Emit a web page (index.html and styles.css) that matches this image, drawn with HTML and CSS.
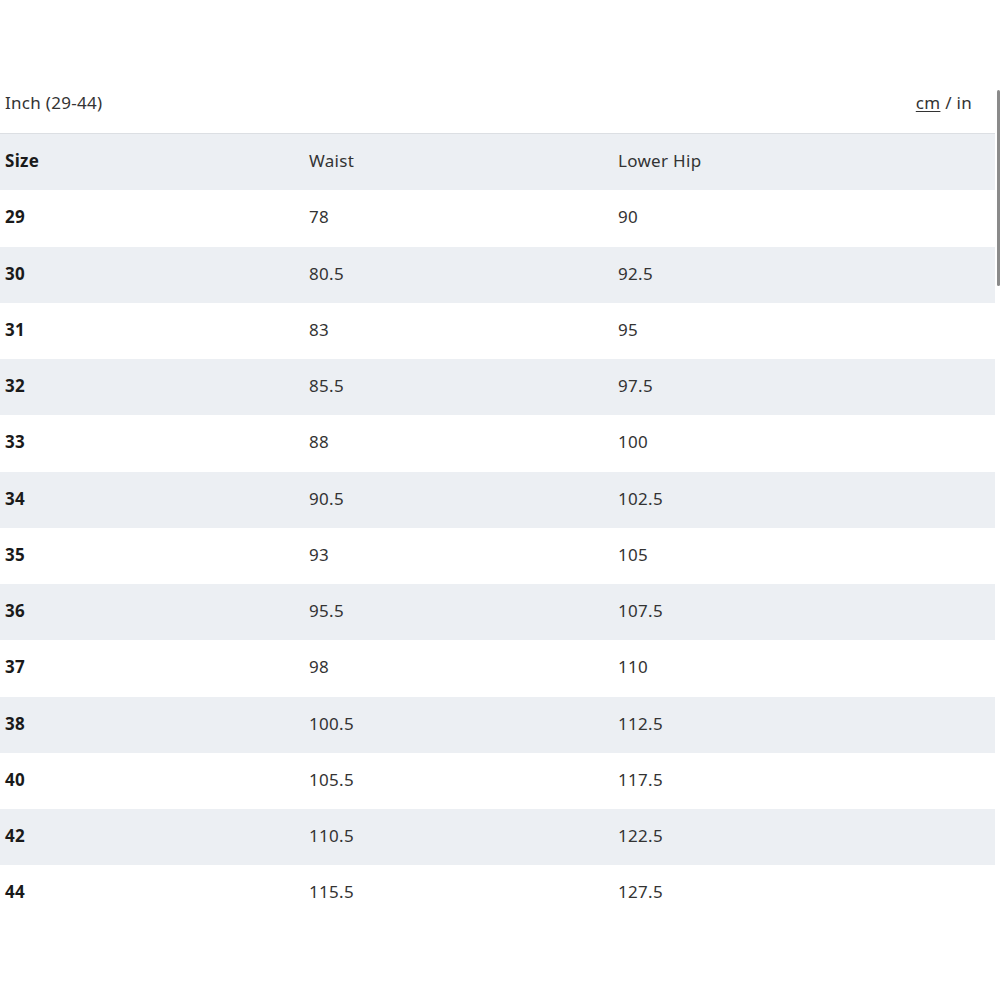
FILE: index.html
```html
<!DOCTYPE html>
<html>
<head>
<meta charset="utf-8">
<link rel="stylesheet" href="styles.css">
</head>
<body>
<div class="page">
  <div class="topbar">
    <span class="title">Inch (29-44)</span>
    <span class="units"><span class="cm">cm</span> / in</span>
  </div>
  <div class="table">
    <div class="row head"><span class="c1">Size</span><span>Waist</span><span>Lower Hip</span></div>
    <div class="row"><span class="c1">29</span><span>78</span><span>90</span></div>
    <div class="row alt"><span class="c1">30</span><span>80.5</span><span>92.5</span></div>
    <div class="row"><span class="c1">31</span><span>83</span><span>95</span></div>
    <div class="row alt"><span class="c1">32</span><span>85.5</span><span>97.5</span></div>
    <div class="row"><span class="c1">33</span><span>88</span><span>100</span></div>
    <div class="row alt"><span class="c1">34</span><span>90.5</span><span>102.5</span></div>
    <div class="row"><span class="c1">35</span><span>93</span><span>105</span></div>
    <div class="row alt"><span class="c1">36</span><span>95.5</span><span>107.5</span></div>
    <div class="row"><span class="c1">37</span><span>98</span><span>110</span></div>
    <div class="row alt"><span class="c1">38</span><span>100.5</span><span>112.5</span></div>
    <div class="row"><span class="c1">40</span><span>105.5</span><span>117.5</span></div>
    <div class="row alt"><span class="c1">42</span><span>110.5</span><span>122.5</span></div>
    <div class="row"><span class="c1">44</span><span>115.5</span><span>127.5</span></div>
  </div>
  <div class="scrollthumb"></div>
</div>
</body>
</html>
```
FILE: styles.css
```css
html, body {
  margin: 0;
  padding: 0;
  background: #fff;
}
body {
  font-family: "Noto Sans", "Liberation Sans", sans-serif;
  color: #2b2b2b;
  font-size: 17px;
  letter-spacing: 0.3px;
}
.page {
  position: relative;
  width: 1000px;
  height: 1000px;
}
.topbar {
  display: flex;
  justify-content: space-between;
  align-items: center;
  width: 995px;
  box-sizing: border-box;
  padding: 85px 23px 12px 5px;
  height: 134px;
  border-bottom: 1px solid #dcdfe3;
  line-height: 26px;
  font-size: 17px;
  color: #333;
}
.cm {
  text-decoration: underline;
  text-underline-offset: 2px;
}
.table {
  width: 995px;
}
.row {
  display: grid;
  grid-template-columns: 304px 309px 1fr;
  align-items: center;
  height: 56.25px;
  padding-bottom: 3px;
  box-sizing: border-box;
  font-size: 17px;
  color: #333;
}
.row span {
  padding-left: 5px;
}
.row.head, .row.alt {
  background: #eceff3;
}
.c1 {
  font-weight: 700;
  color: #1a1a1a;
}
.scrollthumb {
  position: absolute;
  left: 997px;
  top: 90px;
  width: 3px;
  height: 196px;
  background: #8a8a8a;
  border-radius: 2px;
}
```
